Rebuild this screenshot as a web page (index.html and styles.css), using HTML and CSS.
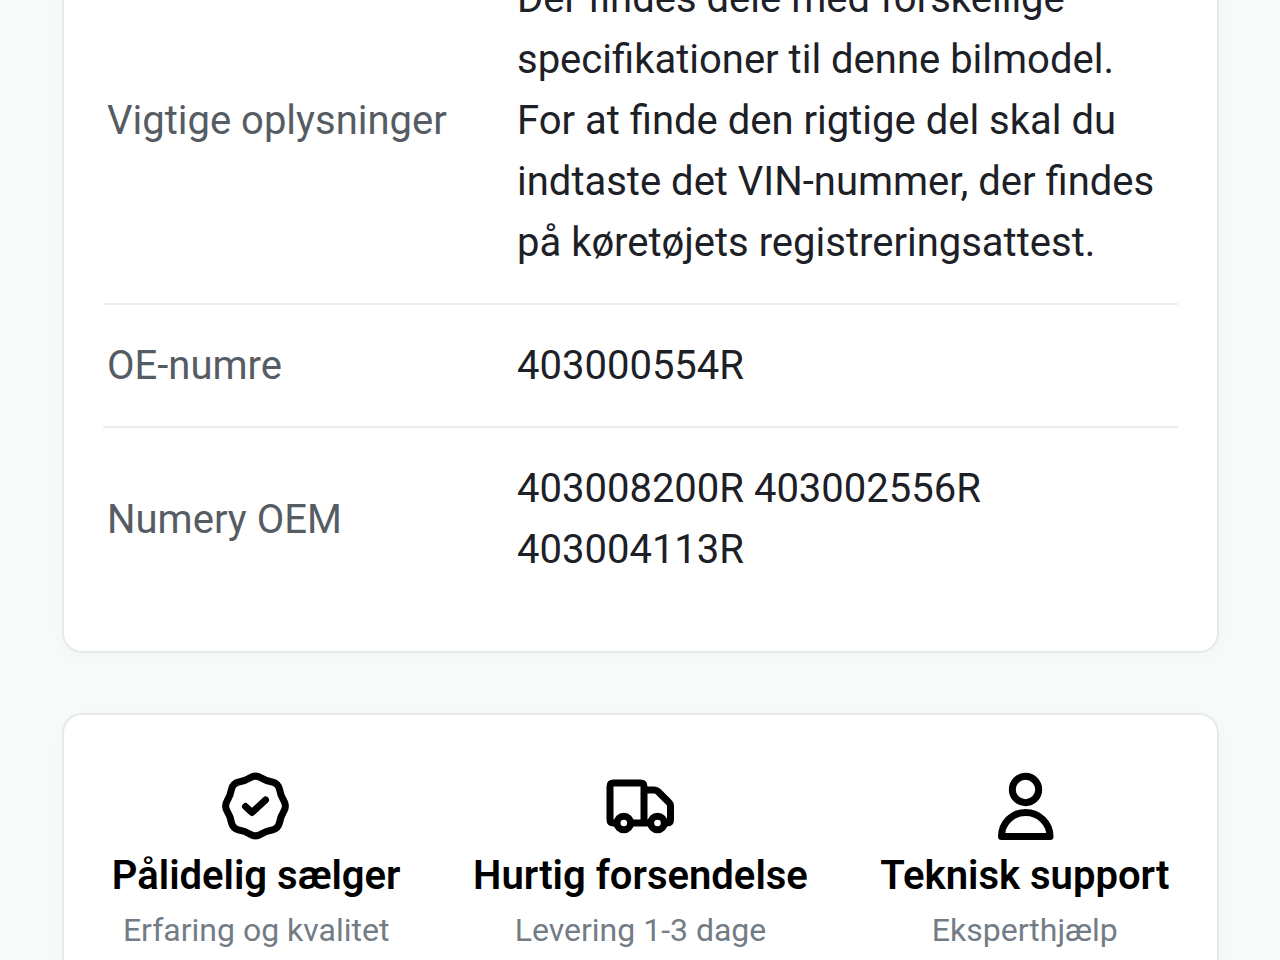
FILE: index.html
```html
<!DOCTYPE html>
<html lang="da">
<head>
<meta charset="utf-8">
<meta name="viewport" content="width=device-width, initial-scale=1">
<title>Produktoplysninger</title>
<link rel="stylesheet" href="styles.css">
</head>
<body>
<main class="page">
  <section class="card details">
    <table class="specs">
      <tbody>
        <tr>
          <th scope="row">Vigtige oplysninger</th>
          <td>Der findes dele med forskellige specifikationer til denne bilmodel. For at finde den rigtige del skal du indtaste det VIN-nummer, der findes på køretøjets registreringsattest.</td>
        </tr>
        <tr>
          <th scope="row">OE-numre</th>
          <td>403000554R</td>
        </tr>
        <tr>
          <th scope="row">Numery OEM</th>
          <td>403008200R 403002556R 403004113R</td>
        </tr>
      </tbody>
    </table>
  </section>

  <section class="card features">
    <div class="feature">
      <svg class="icon" viewBox="0 0 80 80" aria-hidden="true">
        <path transform="translate(39.5 40)" d="M-5.3-28.250Q0-31.500 5.300-28.250Q10.600-25 16.600-24.050Q22.600-22.600 24.050-16.600Q25-10.600 28.250-5.300Q31.500 0 28.250 5.300Q25 10.600 24.050 16.600Q22.600 22.600 16.600 24.050Q10.600 25 5.300 28.250Q0 31.500-5.300 28.250Q-10.600 25-16.600 24.050Q-22.600 22.600-24.050 16.600Q-25 10.600-28.250 5.300Q-31.500 0-28.250-5.300Q-25-10.600-24.050-16.600Q-22.600-22.600-16.600-24.050Q-10.600-25-5.300-28.250Z"/>
        <path d="M29.500 40.500L36 46.500L49.500 34"/>
      </svg>
      <h3 class="feature-title">Pålidelig sælger</h3>
      <p class="feature-text">Erfaring og kvalitet</p>
    </div>
    <div class="feature">
      <svg class="icon" viewBox="0 0 80 80" aria-hidden="true">
        <path d="M16.500 57H13.500Q10 57 10 53.500V20.500Q10 17 13.500 17H40.500Q44 17 44 20.500V57M31 57H50M44 24H54.500Q56.500 24 58 25.500L69 36.500Q70.500 38 70.500 40V53.500Q70.500 57 67 57H64.500"/>
        <circle cx="23.800" cy="57" r="6.800"/>
        <circle cx="57.500" cy="57" r="6.800"/>
      </svg>
      <h3 class="feature-title">Hurtig forsendelse</h3>
      <p class="feature-text">Levering 1-3 dage</p>
    </div>
    <div class="feature">
      <svg class="icon" viewBox="0 0 80 80" aria-hidden="true">
        <circle cx="40.500" cy="23.500" r="13.200"/>
        <path d="M16.500 70.500C16.500 57 27 46.500 40.500 46.500S65 57 65 70.500Z"/>
      </svg>
      <h3 class="feature-title">Teknisk support</h3>
      <p class="feature-text">Eksperthjælp</p>
    </div>
  </section>
</main>
</body>
</html>
```
FILE: styles.css
```css
* {
  box-sizing: border-box;
}

body {
  margin: 0;
  overflow: hidden;
  background: #f6fbfa;
  color: #1d2026;
  font-family: Roboto, "Liberation Sans", sans-serif;
  font-size: 40px;
  line-height: 61px;
}

.page {
  display: flex;
  flex-direction: column;
  gap: 60px;
  padding: 0 61px 0 62px;
}

.card {
  background: #fff;
  border: 2px solid #e6eae9;
  border-radius: 20px;
  box-shadow: 0 4px 16px rgba(0, 0, 0, 0.02);
}

/* The top of the card sits above the scrolled viewport. */
.details {
  margin-top: -104px;
  padding: 40px 39px 41px;
}

.specs {
  width: 100%;
  table-layout: fixed;
  border-collapse: separate;
  border-spacing: 0;
}

.specs th,
.specs td {
  padding: 30px 4px;
  border-bottom: 2px solid #ebedee;
  font-weight: 400;
  text-align: left;
  vertical-align: middle;
}

.specs th {
  width: 410px;
  color: #565c63;
}

.specs tr:last-child th,
.specs tr:last-child td {
  border-bottom: 0;
}

.features {
  display: grid;
  grid-template-columns: repeat(3, 1fr);
  padding: 51px 0;
}

.feature {
  display: flex;
  flex-direction: column;
  align-items: center;
  text-align: center;
}

.icon {
  width: 80px;
  height: 80px;
  fill: none;
  stroke: #000;
  stroke-width: 7;
  stroke-linecap: round;
  stroke-linejoin: round;
}

.feature-title {
  margin: 0;
  color: #000;
  font-size: 40px;
  font-weight: 600;
  line-height: 60px;
}

.feature-text {
  margin: 0;
  color: #737c85;
  font-size: 32px;
  line-height: 48px;
}
```
